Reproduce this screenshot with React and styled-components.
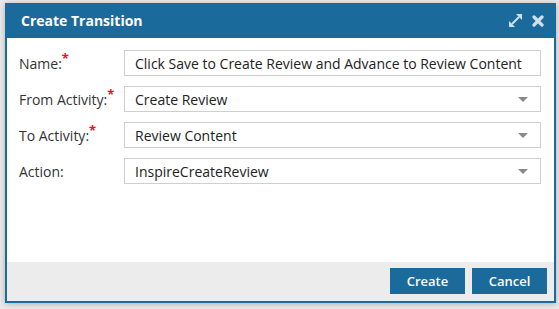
import React from "react";
import styled, { createGlobalStyle } from "styled-components";

const GlobalStyle = createGlobalStyle`
  html, body {
    margin: 0;
    padding: 0;
    background: #e9e9e9;
    font-family: "Open Sans", "Liberation Sans", sans-serif;
  }
`;

const Page = styled.div`
  width: 559px;
  height: 309px;
  padding: 3px 0 0 5px;
  box-sizing: border-box;
`;

const Dialog = styled.div`
  width: 551px;
  height: 300px;
  box-sizing: border-box;
  border: 2px solid #1b6a9c;
  border-top: none;
  background: #fff;
  display: flex;
  flex-direction: column;
  box-shadow: 0 1px 6px rgba(0, 0, 0, 0.25);
`;

const Header = styled.div`
  height: 35px;
  margin: 0 -2px;
  padding: 0 12px 0 16px;
  background: #1b6a9c;
  color: #fff;
  display: flex;
  align-items: center;
  justify-content: space-between;
  flex-shrink: 0;
`;

const Title = styled.h1`
  margin: 0;
  font-size: 14px;
  font-weight: 700;
`;

const Tools = styled.div`
  display: flex;
  align-items: center;
  gap: 9px;
`;

const Body = styled.div`
  flex: 1;
  padding: 12px 13px 0 12px;
  display: flex;
  flex-direction: column;
  gap: 10px;
`;

const Row = styled.div`
  display: flex;
  align-items: center;
  height: 26px;
`;

const Label = styled.label`
  width: 105px;
  flex-shrink: 0;
  font-size: 14px;
  color: #333;
  padding-top: 1px;
`;

const Req = styled.sup`
  color: #e8141c;
  font-size: 13px;
  font-weight: 700;
  line-height: 0;
  position: relative;
  top: 0px;
`;

const Field = styled.div`
  flex: 1;
  height: 26px;
  box-sizing: border-box;
  border: 1px solid #cfcfcf;
  display: flex;
  align-items: center;
  justify-content: space-between;
  padding: 0 12px 0 10px;
  font-size: 14px;
  color: #222;
`;

const Caret = styled.span`
  width: 0;
  height: 0;
  border-left: 5px solid transparent;
  border-right: 5px solid transparent;
  border-top: 5px solid #8a8a8a;
`;

const Footer = styled.div`
  height: 38px;
  background: #ececec;
  display: flex;
  align-items: center;
  justify-content: flex-end;
  gap: 7px;
  padding: 0 7px 1px 0;
  flex-shrink: 0;
`;

const Button = styled.button`
  width: 75px;
  height: 26px;
  border: none;
  background: #1b6a9c;
  color: #fff;
  font-family: "Open Sans", "Liberation Sans", sans-serif;
  font-size: 13px;
  font-weight: 600;
  cursor: pointer;
`;

const ExpandIcon = () => (
  <svg width="15" height="15" viewBox="0 0 15 15">
    <g fill="#cfe0ec">
      <polygon points="8,1 14,1 14,7" />
      <polygon points="7,14 1,14 1,8" />
      <path d="M4 11 L11 4" stroke="#cfe0ec" strokeWidth="2" />
    </g>
  </svg>
);

const CloseIcon = () => (
  <svg width="12" height="12" viewBox="0 0 12 12">
    <path
      d="M2 2 L10 10 M10 2 L2 10"
      stroke="#cfe0ec"
      strokeWidth="3.2"
      strokeLinecap="round"
    />
  </svg>
);

const rows = [
  { label: "Name:", required: true, value: "Click Save to Create Review and Advance to Review Content" },
  { label: "From Activity:", required: true, value: "Create Review", select: true },
  { label: "To Activity:", required: true, value: "Review Content", select: true },
  { label: "Action:", value: "InspireCreateReview", select: true },
];

export default function App() {
  return (
    <Page>
      <GlobalStyle />
      <Dialog>
        <Header>
          <Title>Create Transition</Title>
          <Tools>
            <ExpandIcon />
            <CloseIcon />
          </Tools>
        </Header>
        <Body>
          {rows.map((r) => (
            <Row key={r.label}>
              <Label>
                {r.label}
                {r.required && <Req>*</Req>}
              </Label>
              <Field>
                <span>{r.value}</span>
                {r.select && <Caret />}
              </Field>
            </Row>
          ))}
        </Body>
        <Footer>
          <Button>Create</Button>
          <Button>Cancel</Button>
        </Footer>
      </Dialog>
    </Page>
  );
}
